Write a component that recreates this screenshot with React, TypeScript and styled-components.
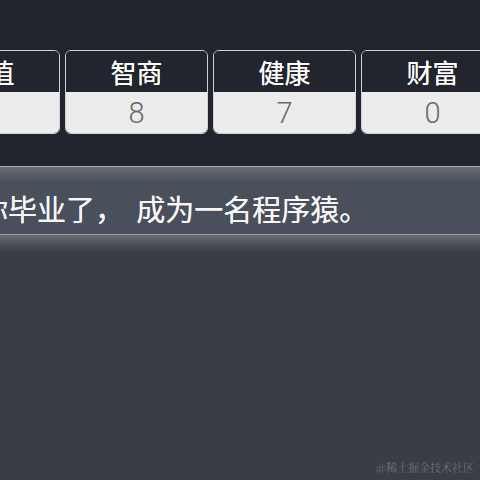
import styled, { createGlobalStyle } from "styled-components";

const GlobalStyle = createGlobalStyle`
  html, body {
    margin: 0;
    padding: 0;
    background: #3a3d46;
  }
  body {
    width: 480px;
    height: 480px;
    overflow: hidden;
    font-family: "Noto Sans CJK SC", "Noto Sans", sans-serif;
  }
`;

const Screen = styled.div`
  width: 480px;
  height: 480px;
  display: flex;
  flex-direction: column;
  background: #3a3d46;
  overflow: hidden;
  position: relative;
`;

const StatsBar = styled.div`
  height: 166px;
  flex-shrink: 0;
  box-sizing: border-box;
  padding-top: 50px;
  background: #22252e;
  overflow: hidden;
`;

const StatsRow = styled.div`
  display: flex;
  gap: 5px;
  margin-left: -83px;
`;

const StatCard = styled.div`
  flex: 0 0 143px;
  height: 84px;
  box-sizing: border-box;
  border: 1.5px solid #cfd0d2;
  border-radius: 6px;
  overflow: hidden;
  display: grid;
  grid-template-rows: 41px 1fr;
`;

const StatTitle = styled.div`
  background: #22252e;
  color: #ffffff;
  font-size: 26px;
  line-height: 41px;
  text-align: center;
  text-shadow: 0 0 0.5px #ffffff;
`;

const StatValue = styled.div`
  background: #ececec;
  color: #6a6a6a;
  font-family: "Roboto", "Noto Sans", sans-serif;
  font-size: 29px;
  font-weight: 300;
  display: flex;
  align-items: center;
  justify-content: center;
`;

const EdgeTop = styled.div`
  height: 14px;
  flex-shrink: 0;
  border-top: 1px solid #a9abae;
  background: linear-gradient(#6b6d73, #5d6068 45%, #4e525d);
`;

const Message = styled.div`
  height: 53px;
  flex-shrink: 0;
  background: #4a4f5c;
  display: flex;
  align-items: center;
  overflow: hidden;
  white-space: nowrap;
`;

const MessageText = styled.span`
  margin-left: -21px;
  color: #f6f6f6;
  font-size: 29px;
  text-shadow: 0 0 0.5px #ffffff;
`;

const EdgeBottom = styled.div`
  height: 18px;
  flex-shrink: 0;
  border-top: 1.5px solid #9a9ca1;
  background: linear-gradient(#6a6c72, #4c4f57 50%, #3a3d46);
`;

const Watermark = styled.div`
  position: absolute;
  right: 6px;
  bottom: 5px;
  color: #6e717a;
  font-size: 11px;
  font-family: "Noto Serif CJK SC", "Noto Sans CJK SC", serif;
`;

const stats = [
  { name: "颜值", value: 5 },
  { name: "智商", value: 8 },
  { name: "健康", value: 7 },
  { name: "财富", value: 0 },
];

export default function App() {
  return (
    <>
      <GlobalStyle />
      <Screen>
        <StatsBar>
          <StatsRow>
            {stats.map((s) => (
              <StatCard key={s.name}>
                <StatTitle>{s.name}</StatTitle>
                <StatValue>{s.value}</StatValue>
              </StatCard>
            ))}
          </StatsRow>
        </StatsBar>
        <EdgeTop />
        <Message>
          <MessageText>你毕业了，&#32;&#8201;成为一名程序猿。</MessageText>
        </Message>
        <EdgeBottom />
        <Watermark>@稀土掘金技术社区</Watermark>
      </Screen>
    </>
  );
}
